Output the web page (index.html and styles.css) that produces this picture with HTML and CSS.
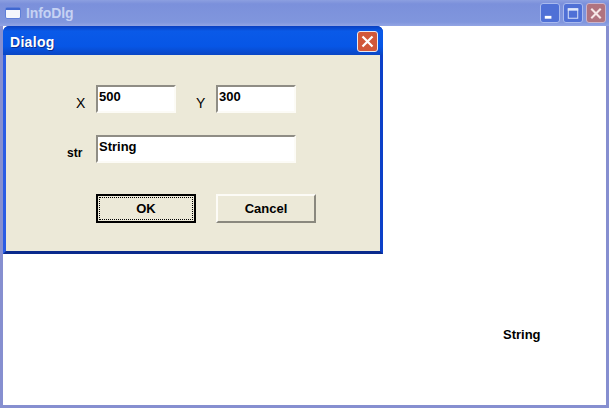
FILE: index.html
```html
<!DOCTYPE html>
<html lang="en">
<head>
    <meta charset="UTF-8">
    <title>InfoDlg</title>
    <link rel="stylesheet" href="styles.css">
</head>
<body>

    <div class="window">
        <div class="titlebar">
            <svg class="app-icon" width="16" height="12" viewBox="0 0 16 12">
                <rect x="0.5" y="0.5" width="15" height="11" rx="1.5" fill="#f4f6fc" stroke="#5f7fd8"/>
                <rect x="1" y="1" width="14" height="2" fill="#3f67d0"/>
            </svg>
            <span class="title-text">InfoDlg</span>
            <div class="caption-buttons">
                <div class="cap-btn">
                    <svg width="19" height="19" viewBox="0 0 19 19"><rect x="4" y="12" width="7" height="3" fill="#fff"/></svg>
                </div>
                <div class="cap-btn">
                    <svg width="19" height="19" viewBox="0 0 19 19"><rect x="4.5" y="4.5" width="10" height="10" fill="none" stroke="#dfe8fb" stroke-width="1"/><rect x="4" y="4" width="11" height="2.5" fill="#dfe8fb"/></svg>
                </div>
                <div class="cap-btn cap-close">
                    <svg width="19" height="19" viewBox="0 0 19 19"><path d="M4.5 4.5 L14.5 14.5 M14.5 4.5 L4.5 14.5" stroke="#f6e6e6" stroke-width="2.2"/></svg>
                </div>
            </div>
        </div>

        <div class="client">
            <span class="client-text">String</span>
        </div>
    </div>

    <div class="dialog">
        <div class="dialog-title">
            <span>Dialog</span>
            <div class="dialog-close">
                <svg width="19" height="19" viewBox="0 0 19 19"><path d="M4.5 4.5 L14.5 14.5 M14.5 4.5 L4.5 14.5" stroke="#fff" stroke-width="2.2"/></svg>
            </div>
        </div>
        <div class="dialog-body">
            <div class="row row-xy">
                <label class="lbl lbl-x">X</label>
                <input class="field field-short" type="text" value="500">
                <label class="lbl lbl-y">Y</label>
                <input class="field field-short" type="text" value="300">
            </div>
            <div class="row row-str">
                <label class="lbl lbl-str">str</label>
                <input class="field field-long" type="text" value="String">
            </div>
            <div class="row row-buttons">
                <button class="btn btn-default"><span>OK</span></button>
                <button class="btn">Cancel</button>
            </div>
        </div>
    </div>

</body>
</html>
```

FILE: styles.css
```css
html, body {
    margin: 0;
    padding: 0;
    height: 100%;
    overflow: hidden;
}
body {
    width: 609px;
    height: 408px;
    position: relative;
    font-family: "Liberation Sans", Arial, sans-serif;
    font-weight: bold;
    font-size: 13px;
    color: #000;
}
.window {
    width: 609px;
    height: 408px;
    box-sizing: border-box;
    display: flex;
    flex-direction: column;
    background-color: #868fd0;
}
.titlebar {
    height: 26px;
    flex-shrink: 0;
    display: flex;
    align-items: center;
    padding: 0 3px 0 5px;
    background: linear-gradient(to bottom, #8c9fe0 0%, #7b90db 15%, #8096dd 85%, #93a5e4 100%);
}
.app-icon {
    margin-right: 5px;
}
.title-text {
    color: #c6d2f3;
    font-size: 14px;
    letter-spacing: -0.1px;
}
.caption-buttons {
    margin-left: auto;
    display: flex;
    gap: 3px;
}
.cap-btn {
    width: 20px;
    height: 20px;
    box-sizing: border-box;
    border: 1px solid #a9baee;
    border-radius: 3px;
    background-color: #4f70d6;
    display: flex;
    align-items: center;
    justify-content: center;
}
.cap-close {
    background-color: #b0737f;
    border-color: #c9b4cc;
}
.client {
    flex: 1;
    margin: 0 3px 3px 3px;
    background-color: #fff;
    position: relative;
}
.client-text {
    position: absolute;
    left: 500px;
    top: 301px;
    font-size: 13px;
}

/* dialog floats over the main window */
.dialog {
    position: absolute;
    left: 3px;
    top: 26px;
    width: 380px;
    height: 228px;
    box-sizing: border-box;
    display: flex;
    flex-direction: column;
    border-radius: 6px 6px 0 0;
    background-color: #0a4fd8;
    border-left: 3px solid #2a5ce4;
    border-right: 3px solid #0c40c8;
    border-bottom: 3px solid #0a2a8c;
}
.dialog-title {
    height: 29px;
    flex-shrink: 0;
    box-sizing: border-box;
    margin: 0 -3px 0 -3px;
    padding: 2px 5px 0 7px;
    display: flex;
    align-items: center;
    justify-content: space-between;
    border-radius: 6px 6px 0 0;
    background: linear-gradient(to bottom, #0a3fc0 0%, #0a5ae8 18%, #0756e6 70%, #0a46c4 100%);
    color: #fff;
    font-size: 14px;
    letter-spacing: 0.3px;
    text-shadow: 1px 1px 0 #0a2f90;
}
.dialog-close {
    width: 21px;
    height: 21px;
    box-sizing: border-box;
    border: 1px solid #e8e8f0;
    border-radius: 3px;
    background-color: #d1583a;
    display: flex;
    align-items: center;
    justify-content: center;
}
.dialog-body {
    flex: 1;
    background-color: #ece9d8;
    padding-top: 30px;
    padding-left: 90px;
}
.row {
    display: flex;
    align-items: flex-start;
}
.row-str {
    margin-top: 22px;
}
.row-buttons {
    margin-top: 31px;
    gap: 20px;
}
.lbl {
    font-weight: normal;
    line-height: 16px;
}
.lbl-x, .lbl-y {
    font-size: 14px;
    margin-top: 10px;
}
.lbl-x {
    margin-left: -20px;
    width: 20px;
}
.lbl-y {
    width: 20px;
    margin-left: 20px;
}
.lbl-str {
    font-weight: bold;
    font-size: 12px;
    margin-top: 10px;
    margin-left: -29px;
    width: 29px;
}
.field {
    height: 28px;
    box-sizing: border-box;
    padding: 0 0 6px 1px;
    margin: 0;
    font-family: inherit;
    font-weight: bold;
    font-size: 13px;
    color: #000;
    background-color: #fff;
    border: 2px solid;
    border-color: #8f8d85 #fcfbf6 #fcfbf6 #8f8d85;
    outline: none;
}
.field-short {
    width: 80px;
}
.field-long {
    width: 200px;
}
.btn {
    width: 100px;
    height: 29px;
    box-sizing: border-box;
    padding: 0;
    font-family: inherit;
    font-weight: bold;
    font-size: 13px;
    color: #000;
    background-color: #ece9d8;
    border: 2px solid;
    border-color: #fcfbf6 #8a887e #8a887e #fcfbf6;
}
.btn-default {
    border: 2px solid #000;
    display: flex;
    padding: 1px;
}
.btn-default span {
    flex: 1;
    display: flex;
    align-items: center;
    justify-content: center;
    border: 1px dotted #000;
}
```
